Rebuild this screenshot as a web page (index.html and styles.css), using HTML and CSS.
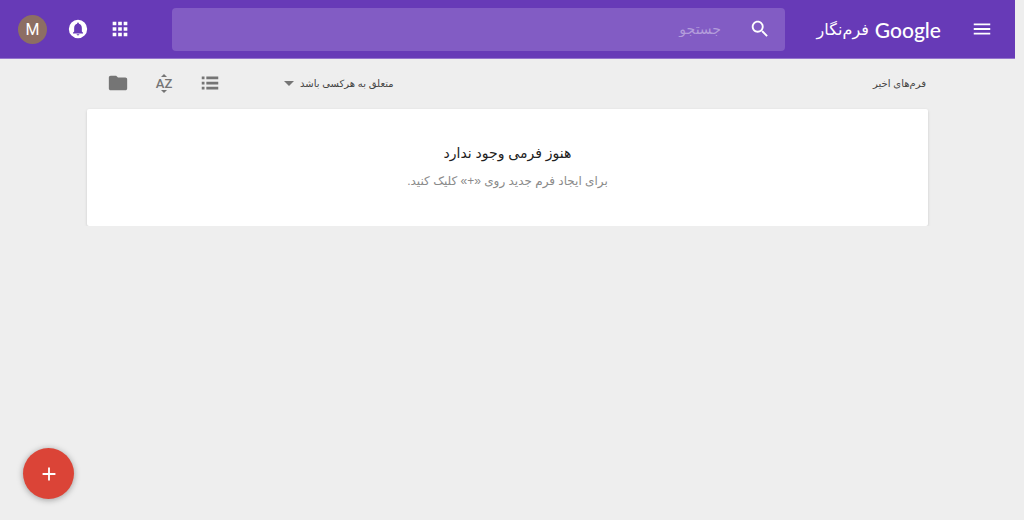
FILE: index.html
```
<!DOCTYPE html>
<html lang="fa" dir="rtl">
<head>
    <meta charset="UTF-8">
    <meta name="viewport" content="width=device-width, initial-scale=1.0">
    <title>Google فرم‌نگار</title>
    <link rel="stylesheet" href="styles.css">
</head>
<body>
    <header class="header">
        <div class="brand">
            <button class="icon-button" type="button" aria-label="منو">
                <svg width="22" height="22" viewBox="0 0 24 24"><path d="M3 18h18v-2H3v2zm0-5h18v-2H3v2zm0-7v2h18V6H3z"/></svg>
            </button>
            <a class="logo" href="#"><span class="logo-google" dir="ltr">Google</span><span class="logo-product">فرم‌نگار</span></a>
        </div>
        <form class="search" role="search">
            <button class="icon-button" type="submit" aria-label="جستجو">
                <svg width="22" height="22" viewBox="0 0 24 24"><path d="M15.5 14h-.79l-.28-.27C15.41 12.59 16 11.11 16 9.5 16 5.91 13.09 3 9.5 3S3 5.91 3 9.5 5.91 16 9.5 16c1.61 0 3.09-.59 4.23-1.57l.27.28v.79l5 4.99L20.49 19l-4.99-5zm-6 0C7.01 14 5 11.99 5 9.5S7.01 5 9.5 5 14 7.01 14 9.5 11.99 14 9.5 14z"/></svg>
            </button>
            <input class="search-input" type="text" placeholder="جستجو" aria-label="جستجو">
        </form>
        <div class="account">
            <button class="icon-button" type="button" aria-label="برنامه‌ها">
                <svg width="22" height="22" viewBox="0 0 24 24"><path d="M4 8h4V4H4v4zm6 12h4v-4h-4v4zm-6 0h4v-4H4v4zm0-6h4v-4H4v4zm6 0h4v-4h-4v4zm6-10v4h4V4h-4zm-6 4h4V4h-4v4zm6 6h4v-4h-4v4zm0 6h4v-4h-4v4z"/></svg>
            </button>
            <button class="icon-button" type="button" aria-label="اعلان‌ها">
                <svg width="22" height="22" viewBox="0 0 24 24"><path fill-rule="evenodd" d="M12 2a10 10 0 1 0 0 20 10 10 0 0 0 0-20zM12 19c-.9 0-1.500-.6-1.500-1.300h3c0 .7-.6 1.300-1.500 1.300zM17.500 17h-11v-1l1.300-1.300V11c0-2.300 1.200-4.100 3.200-4.600V6c0-.6.4-1 1-1s1 .4 1 1v.4c2 .5 3.200 2.300 3.200 4.600v3.700l1.300 1.300v1z"/></svg>
            </button>
            <button class="avatar" type="button">M</button>
        </div>
    </header>

    <main class="content">
        <div class="toolbar">
            <h1 class="toolbar-title">فرم‌های اخیر</h1>
            <button class="owner-filter" type="button">
                متعلق به هرکسی باشد
                <svg width="10" height="5" viewBox="0 0 10 5"><path d="M0 0l5 5 5-5z"/></svg>
            </button>
            <div class="tools">
                <button class="icon-button" type="button" aria-label="نمای فهرستی">
                    <svg width="22" height="22" viewBox="0 0 24 24"><path d="M3 5h3v3H3zM8 5h13v3H8zM3 10.500h3v3H3zM8 10.500h13v3H8zM3 16h3v3H3zM8 16h13v3H8z"/></svg>
                </button>
                <button class="icon-button sort" type="button" aria-label="ترتیب">
                    <svg width="6" height="3" viewBox="0 0 6 3"><path d="M0 3l3-3 3 3z"/></svg>
                    <span class="sort-label" dir="ltr">AZ</span>
                    <svg width="6" height="3" viewBox="0 0 6 3"><path d="M0 0l3 3 3-3z"/></svg>
                </button>
                <button class="icon-button" type="button" aria-label="باز کردن انتخابگر فایل">
                    <svg width="22" height="22" viewBox="0 0 24 24"><path d="M10 4H4c-1.100 0-2 .9-2 2v12c0 1.100.9 2 2 2h16c1.100 0 2-.9 2-2V8c0-1.100-.9-2-2-2h-8l-2-2z"/></svg>
                </button>
            </div>
        </div>
        <section class="empty-card">
            <h2 class="empty-title">هنوز فرمی وجود ندارد</h2>
            <p class="empty-text">برای ایجاد فرم جدید روی «+» کلیک کنید.</p>
        </section>
    </main>

    <button class="create-button" type="button" aria-label="ایجاد فرم جدید">
        <svg width="22" height="22" viewBox="0 0 24 24"><path d="M19 13h-6v6h-2v-6H5v-2h6V5h2v6h6v2z"/></svg>
    </button>
</body>
</html>
```
FILE: styles.css
```
html {
    background-color: #eee;
}
body {
    margin: 0 9px 0 0;
    font-family: "Liberation Sans", "DejaVu Sans", sans-serif;
    color: #212121;
}
button {
    margin: 0;
    padding: 0;
    border: 0;
    background: none;
    font-family: inherit;
    color: inherit;
    cursor: pointer;
}
svg {
    display: block;
    fill: currentColor;
}
.icon-button {
    display: flex;
    align-items: center;
    justify-content: center;
    flex: none;
    width: 22px;
    height: 22px;
}
.header {
    display: flex;
    align-items: center;
    height: 58px;
    background-color: #673ab7;
    border-bottom: 1px solid #9575cd;
    color: #fff;
}
.brand {
    display: flex;
    align-items: center;
    gap: 30px;
    box-sizing: border-box;
    width: 230px;
    padding-right: 22px;
}
.logo {
    display: flex;
    align-items: center;
    gap: 6px;
    color: #fff;
    text-decoration: none;
    white-space: nowrap;
}
.logo-google {
    font-family: Lato, sans-serif;
    font-size: 21px;
    font-weight: 500;
}
.logo-product {
    font-size: 16px;
}
.search {
    display: flex;
    align-items: center;
    flex: 1;
    gap: 28px;
    height: 43px;
    box-sizing: border-box;
    padding: 0 14px;
    border-radius: 4px;
    background-color: #825cc4;
}
.search-input {
    flex: 1;
    min-width: 0;
    padding: 0;
    border: 0;
    outline: 0;
    background: none;
    color: #fff;
    font-family: inherit;
    font-size: 14px;
}
.search-input::placeholder {
    color: #b39ddb;
    opacity: 1;
}
.account {
    display: flex;
    align-items: center;
    justify-content: flex-end;
    gap: 20px;
    box-sizing: border-box;
    width: 172px;
    padding-left: 18px;
}
.avatar {
    width: 29px;
    height: 29px;
    border-radius: 50%;
    background-color: #8d6e63;
    font-family: Roboto, sans-serif;
    font-size: 16px;
}
.content {
    margin: 0 87px;
}
.toolbar {
    display: flex;
    align-items: center;
    height: 48px;
    padding: 0 2px 2px 20px;
    color: #757575;
}
.toolbar-title {
    flex: 1;
    margin: 0;
    font-size: 10px;
    font-weight: normal;
    color: #444;
}
.owner-filter {
    display: flex;
    align-items: center;
    gap: 6px;
    font-size: 10px;
    color: #444;
}
.owner-filter svg {
    fill: #757575;
}
.tools {
    display: flex;
    align-items: center;
    justify-content: space-between;
    width: 114px;
    margin-right: 63px;
}
.sort {
    flex-direction: column;
    gap: 1px;
}
.sort-label {
    font-family: Roboto, sans-serif;
    font-size: 13px;
    font-weight: 500;
    line-height: 11px;
}
.empty-card {
    padding: 34px 16px;
    border-radius: 2px;
    background-color: #fff;
    box-shadow: 0 1px 3px rgba(0, 0, 0, 0.15);
    text-align: center;
}
.empty-title {
    margin: 0 0 8px;
    font-size: 14px;
    font-weight: normal;
    line-height: 20px;
}
.empty-text {
    margin: 0;
    font-size: 12px;
    line-height: 21px;
    color: #8a8a8a;
}
.create-button {
    position: fixed;
    left: 23px;
    bottom: 21px;
    display: flex;
    align-items: center;
    justify-content: center;
    width: 51px;
    height: 51px;
    border-radius: 50%;
    background-color: #db4437;
    box-shadow: 0 1px 6px rgba(0, 0, 0, 0.35);
    color: #fff;
}
```
